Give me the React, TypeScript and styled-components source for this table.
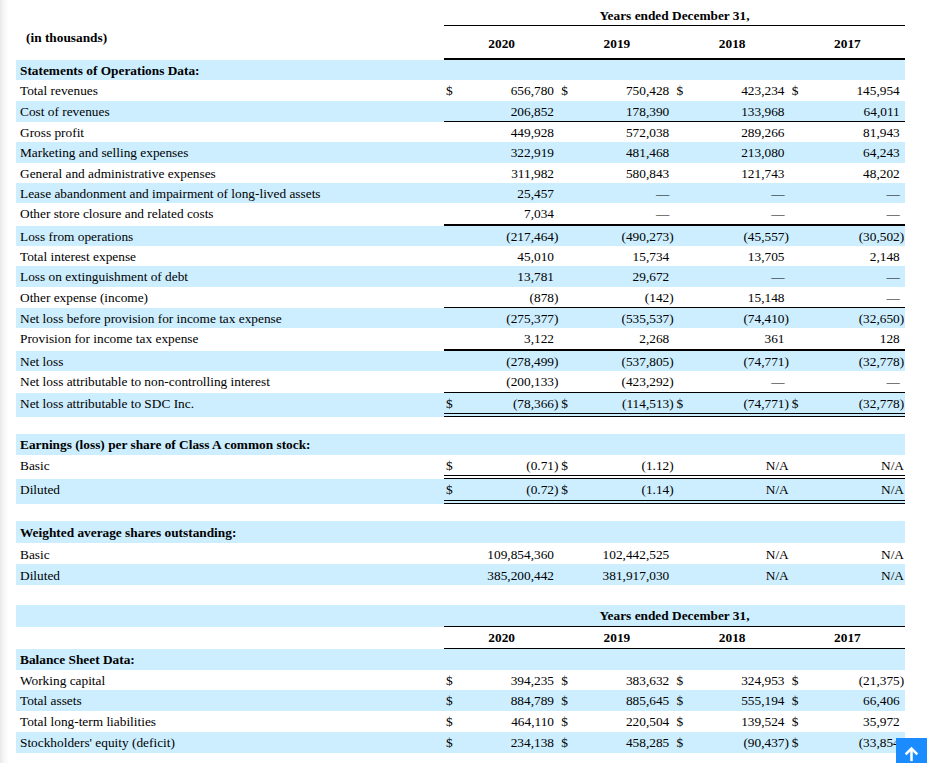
import React from 'react'
import styled, {createGlobalStyle} from 'styled-components'

type Rule = 'single' | 'thick' | 'double'

type Cell = {
  dollar?: boolean
  value?: string
  wide?: boolean
}

type RowData = {
  label: string
  bold?: boolean
  rule?: Rule
  cells?: Cell[]
}

const plain = (...values: string[]): Cell[] => values.map(value => ({value}))
const dollars = (...values: string[]): Cell[] => values.map(value => ({dollar: true, value}))

const YEARS = ['2020', '2019', '2018', '2017']

const operations: RowData[] = [
  {label: 'Statements of Operations Data:', bold: true},
  {label: 'Total revenues', cells: dollars('656,780', '750,428', '423,234', '145,954')},
  {label: 'Cost of revenues', rule: 'single', cells: plain('206,852', '178,390', '133,968', '64,011')},
  {label: 'Gross profit', cells: plain('449,928', '572,038', '289,266', '81,943')},
  {label: 'Marketing and selling expenses', cells: plain('322,919', '481,468', '213,080', '64,243')},
  {label: 'General and administrative expenses', cells: plain('311,982', '580,843', '121,743', '48,202')},
  {label: 'Lease abandonment and impairment of long-lived assets', cells: plain('25,457', '—', '—', '—')},
  {label: 'Other store closure and related costs', rule: 'thick', cells: plain('7,034', '—', '—', '—')},
  {label: 'Loss from operations', cells: plain('(217,464)', '(490,273)', '(45,557)', '(30,502)')},
  {label: 'Total interest expense', cells: plain('45,010', '15,734', '13,705', '2,148')},
  {label: 'Loss on extinguishment of debt', cells: plain('13,781', '29,672', '—', '—')},
  {label: 'Other expense (income)', rule: 'single', cells: plain('(878)', '(142)', '15,148', '—')},
  {label: 'Net loss before provision for income tax expense', cells: plain('(275,377)', '(535,537)', '(74,410)', '(32,650)')},
  {label: 'Provision for income tax expense', rule: 'thick', cells: plain('3,122', '2,268', '361', '128')},
  {label: 'Net loss', cells: plain('(278,499)', '(537,805)', '(74,771)', '(32,778)')},
  {label: 'Net loss attributable to non-controlling interest', rule: 'single', cells: plain('(200,133)', '(423,292)', '—', '—')},
  {label: 'Net loss attributable to SDC Inc.', rule: 'double', cells: dollars('(78,366)', '(114,513)', '(74,771)', '(32,778)')},
]

const na: Cell = {value: 'N/A', wide: true}

const earnings: RowData[] = [
  {label: 'Earnings (loss) per share of Class A common stock:', bold: true},
  {label: 'Basic', rule: 'double', cells: [{dollar: true, value: '(0.71)'}, {dollar: true, value: '(1.12)'}, na, na]},
  {label: 'Diluted', rule: 'double', cells: [{dollar: true, value: '(0.72)'}, {dollar: true, value: '(1.14)'}, na, na]},
]

const shares: RowData[] = [
  {label: 'Weighted average shares outstanding:', bold: true},
  {label: 'Basic', cells: [{value: '109,854,360'}, {value: '102,442,525'}, na, na]},
  {label: 'Diluted', cells: [{value: '385,200,442'}, {value: '381,917,030'}, na, na]},
]

const balance: RowData[] = [
  {label: 'Balance Sheet Data:', bold: true},
  {label: 'Working capital', cells: dollars('394,235', '383,632', '324,953', '(21,375)')},
  {label: 'Total assets', cells: dollars('884,789', '885,645', '555,194', '66,406')},
  {label: 'Total long-term liabilities', cells: dollars('464,110', '220,504', '139,524', '35,972')},
  {label: "Stockholders' equity (deficit)", cells: dollars('234,138', '458,285', '(90,437)', '(33,854)')},
]

const GroupCells = ({cell}: {cell: Cell}) => {
  const raw = cell.value ?? ''
  const negative = raw.startsWith('(') && raw.endsWith(')')
  return (
    <>
      <Dollar>{cell.dollar ? '$' : ''}</Dollar>
      {cell.wide ? (
        <Wide>{raw}</Wide>
      ) : (
        <>
          <Value>{negative ? raw.slice(0, -1) : raw}</Value>
          <Paren>{negative ? ')' : ''}</Paren>
        </>
      )}
    </>
  )
}

// rows alternate blue / white inside each table, starting with blue
const DataRows = ({rows, h, offset = 0}: {rows: RowData[]; h: number; offset?: number}) => (
  <>
    {rows.map((row, idx) => (
      <Row key={row.label + idx} h={h} shaded={(idx + offset) % 2 === 0}>
        <Label bold={row.bold}>{row.label}</Label>
        <Figures rule={row.rule}>
          {(row.cells ?? []).map((cell, i) => (
            <GroupCells key={i} cell={cell} />
          ))}
        </Figures>
      </Row>
    ))}
  </>
)

export default function App() {
  return (
    <>
      <GlobalStyle />
      <Page>
        <Table>
          <HeadRow>
            <Label />
            <Title>Years ended December 31,</Title>
          </HeadRow>
          <HeadRow>
            <Units>(in thousands)</Units>
            <YearsHead rule="thick">
              {YEARS.map(year => (
                <Year key={year}>{year}</Year>
              ))}
            </YearsHead>
          </HeadRow>
          <DataRows rows={operations} h={20.35} />
        </Table>

        <Spacer h={17.5} />
        <Table>
          <DataRows rows={earnings} h={20.5} />
        </Table>

        <Spacer h={17.5} />
        <Table>
          <DataRows rows={shares} h={21.3} />
        </Table>

        <Spacer h={20} />
        <Table>
          <Row h={20.8} shaded>
            <Label />
            <Figures rule="single">
              <Centered>Years ended December 31,</Centered>
            </Figures>
          </Row>
          <Row h={20.8} shaded={false}>
            <Label />
            <Figures rule="single">
              {YEARS.map(year => (
                <Year key={year}>{year}</Year>
              ))}
            </Figures>
          </Row>
          <DataRows rows={balance} h={20.8} />
        </Table>
      </Page>

      <ScrollTop aria-label="Back to top">
        <svg width="17" height="17" viewBox="0 0 24 24" fill="none" stroke="#fff" strokeWidth="3.6" strokeLinecap="square">
          <path d="M12 21V6" />
          <path d="M5 12l7-7 7 7" />
        </svg>
      </ScrollTop>
    </>
  )
}

const GlobalStyle = createGlobalStyle`
  html, body {
    margin: 0;
    padding: 0;
  }
  body {
    background: linear-gradient(to right, #e9e9e9 0, #f6f6f6 4px, #fff 9px);
    color: #000;
    font-family: 'Liberation Serif', 'Times New Roman', serif;
    font-size: 13.33px;
    min-height: 763px;
  }
`

const Page = styled.div`
  padding-left: 16px;
  width: 889px;
`

const Table = styled.div`
  display: flex;
  flex-direction: column;
`

const Row = styled.div<{shaded: boolean; h: number}>`
  display: grid;
  grid-template-columns: 428px 1fr;
  background: ${props => (props.shaded ? '#cceeff' : 'transparent')};
  padding-top: 2px;
  line-height: ${props => props.h - 2}px;
`

const HeadRow = styled.div`
  display: grid;
  grid-template-columns: 428px 1fr;
  line-height: normal;
`

const Label = styled.div<{bold?: boolean}>`
  padding-left: 4px;
  font-weight: ${props => (props.bold ? 700 : 400)};
  white-space: nowrap;
`

const Units = styled.div`
  padding: 4px 0 0 10px;
  font-weight: 700;
`

const ruleStyle = (rule?: Rule) => {
  if (rule === 'single') return 'border-bottom: 1px solid #000;'
  if (rule === 'thick') return 'border-bottom: 2px solid #000;'
  if (rule === 'double') return 'border-bottom: 4px double #000;'
  return ''
}

const Figures = styled.div<{rule?: Rule}>`
  display: grid;
  grid-template-columns: repeat(4, 16px 94px 5.25px);
  ${props => ruleStyle(props.rule)}
`

const Title = styled.div`
  padding-top: 8px;
  height: 17px;
  text-align: center;
  font-weight: 700;
  border-bottom: 1px solid #000;
`

const YearsHead = styled(Figures)`
  padding-top: 10px;
  height: 22px;
  align-items: start;
`

const Year = styled.div`
  grid-column: span 3;
  text-align: center;
  font-weight: 700;
`

const Centered = styled.div`
  grid-column: 1 / -1;
  text-align: center;
  font-weight: 700;
`

const Dollar = styled.div`
  padding-left: 2px;
`

const Value = styled.div`
  text-align: right;
  white-space: nowrap;
`

const Paren = styled.div`
  text-align: left;
`

const Wide = styled.div`
  grid-column: span 2;
  text-align: right;
  padding-right: 1px;
`

const Spacer = styled.div<{h: number}>`
  height: ${props => props.h}px;
`

const ScrollTop = styled.button`
  position: fixed;
  right: 0;
  bottom: -6px;
  width: 31px;
  height: 31px;
  border: none;
  padding: 0;
  background: #1a8cff;
  display: flex;
  align-items: center;
  justify-content: center;
  cursor: pointer;
`
